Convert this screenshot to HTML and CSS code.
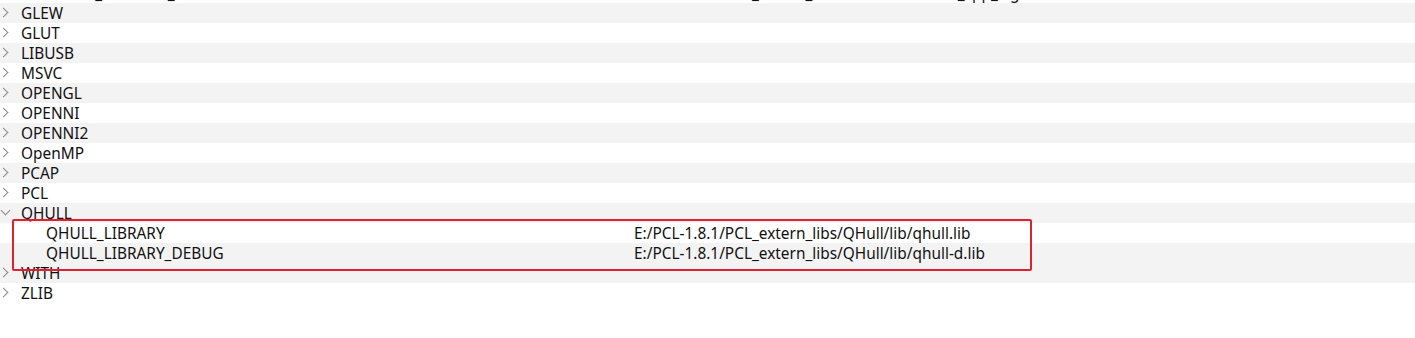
FILE: index.html
```html
<!DOCTYPE html>
<html lang="en">
<head>
    <meta charset="UTF-8">
    <meta name="viewport" content="width=device-width, initial-scale=1.0">
    <title>CMake</title>
    <link rel="stylesheet" href="styles.css">
</head>
<body>
    <div class="tree">
        <!-- 上一组被滚动裁掉的子项 -->
        <div class="row child">
            <span class="name">FLANN_INCLUDE_DIR</span>
            <span class="value">E:/PCL-1.8.1/PCL_extern_libs/FLANN/lib/flann_cpp_s-gd.lib</span>
        </div>
        <div class="row"><span class="name"><i class="arrow"></i>GLEW</span></div>
        <div class="row"><span class="name"><i class="arrow"></i>GLUT</span></div>
        <div class="row"><span class="name"><i class="arrow"></i>LIBUSB</span></div>
        <div class="row"><span class="name"><i class="arrow"></i>MSVC</span></div>
        <div class="row"><span class="name"><i class="arrow"></i>OPENGL</span></div>
        <div class="row"><span class="name"><i class="arrow"></i>OPENNI</span></div>
        <div class="row"><span class="name"><i class="arrow"></i>OPENNI2</span></div>
        <div class="row"><span class="name"><i class="arrow"></i>OpenMP</span></div>
        <div class="row"><span class="name"><i class="arrow"></i>PCAP</span></div>
        <div class="row"><span class="name"><i class="arrow"></i>PCL</span></div>
        <div class="row"><span class="name"><i class="arrow open"></i>QHULL</span></div>
        <div class="group marked">
            <div class="row child">
                <span class="name">QHULL_LIBRARY</span>
                <span class="value">E:/PCL-1.8.1/PCL_extern_libs/QHull/lib/qhull.lib</span>
            </div>
            <div class="row child">
                <span class="name">QHULL_LIBRARY_DEBUG</span>
                <span class="value">E:/PCL-1.8.1/PCL_extern_libs/QHull/lib/qhull-d.lib</span>
            </div>
        </div>
        <div class="row"><span class="name"><i class="arrow"></i>WITH</span></div>
        <div class="row"><span class="name"><i class="arrow"></i>ZLIB</span></div>
    </div>
</body>
</html>
```

FILE: styles.css
```css
body {
    margin: 0;
    background: #fff;
    font-family: "Noto Sans", "Noto Sans CJK SC", sans-serif;
    font-size: 15.4px;
    color: #111;
    overflow: hidden;
}
/* 列表整体向上滚动了一部分 */
.tree {
    margin-top: -17px;
}
.row {
    display: grid;
    grid-template-columns: 634px 1fr;
    height: 20px;
    line-height: 22px;
    overflow: hidden;
    white-space: nowrap;
}
.tree > .row:nth-child(even),
.group > .row:nth-child(even) {
    background: #f3f3f3;
}
.name {
    display: flex;
    align-items: flex-start;
}
.arrow {
    width: 21px;
    height: 20px;
    flex: none;
    position: relative;
}
/* 折叠箭头 */
.arrow::before {
    content: "";
    position: absolute;
    left: 0;
    top: 6px;
    width: 6px;
    height: 6px;
    border-right: 1.3px solid #8a8a8a;
    border-bottom: 1.3px solid #8a8a8a;
    transform: rotate(-45deg);
}
.arrow.open::before {
    left: 2px;
    top: 4px;
    transform: rotate(45deg);
}
.child .name {
    padding-left: 46px;
}
/* 红框标注 */
.group {
    position: relative;
}
.marked::after {
    content: "";
    position: absolute;
    left: 12px;
    top: -4px;
    width: 1020px;
    height: 52px;
    box-sizing: border-box;
    border: 2px solid #e0202e;
    border-radius: 2px;
}
```
